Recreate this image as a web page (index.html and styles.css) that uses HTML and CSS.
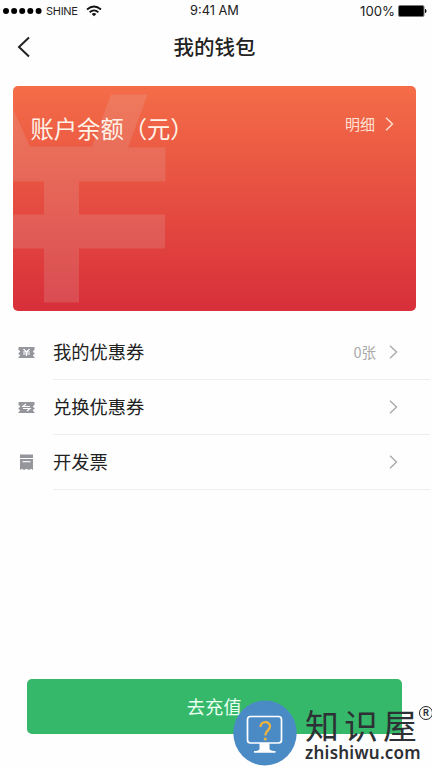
FILE: index.html
```html
<!DOCTYPE html>
<html lang="zh-CN">
<head>
<meta charset="utf-8">
<title>我的钱包</title>
<link rel="stylesheet" href="styles.css">
</head>
<body>
<div class="screen">
  <div class="status">
    <div class="signal">
      <svg class="dots" width="39" height="8" viewBox="0 0 39 8"><circle cx="3" cy="4" r="3"/><circle cx="11.1" cy="4" r="3"/><circle cx="19.2" cy="4" r="3"/><circle cx="27.3" cy="4" r="3"/><circle cx="35.6" cy="4" r="3"/></svg>
      <span class="carrier">SHINE</span>
      <svg class="wifi" width="16" height="12" viewBox="0 0 16 12" fill="none" stroke="#111" stroke-width="1.8"><path d="M1 4.5Q8 -1.4 15 4.5"/><path d="M3.6 7.2Q8 3.6 12.4 7.2"/><path d="M5.6 8.9Q8 7.1 10.4 8.9L8 11.3Z" fill="#111" stroke="none"/></svg>
    </div>
    <div class="time">9:41 AM</div>
    <div class="power"><span>100%</span>
      <svg width="29" height="12" viewBox="0 0 29 12"><rect x=".5" y=".5" width="25.5" height="11" rx="1.5" fill="#000" stroke="#777"/><path d="M27 4Q28.5 4.2 28.5 6T27 8Z"/></svg>
    </div>
  </div>
  <header class="nav">
    <svg class="back" width="14" height="22" viewBox="0 0 14 22"><path d="M12 1.5 2 11l10 9.5" fill="none" stroke="#222" stroke-width="2"/></svg>
    <h1>我的钱包</h1>
  </header>
  <section class="card">
    <svg class="yen" width="154" height="225" viewBox="0 0 154 225"><path d="M98 8.500H134.500L115 61.500H152.500V95.500H66V128.500H152V162.500H66V216.500H31V162.500H0V128.500H31V95.500H0V23L17 60.500H79Z" fill="#dfb8b4" fill-opacity=".2"/></svg>
    <h2>账户余额（元）</h2>
    <a class="detail">明细<svg class="chev" width="9" height="14" viewBox="0 0 9 14"><path d="M1 .8 7.500 7 1 13.200"/></svg></a>
  </section>
  <main class="list">
    <div class="row">
      <svg class="icon" width="17" height="17" viewBox="0 0 17 17"><path d="M.5 3H16.500V6L15 7V8L16.500 9V10L15 11V12L16.500 13V14H.5V13L2 12V11L.5 10V9L2 8V7L.5 6Z" fill="#94969c"/><path d="M5.500 5 8.500 8l3-3M5 8h7M5 10h7M8.500 8v4" fill="none" stroke="#fff" stroke-width="1.100"/></svg>
      <div class="item"><span>我的优惠券</span><span class="count">0张</span><svg class="chev" width="9" height="14" viewBox="0 0 9 14"><path d="M1 .8 7.500 7 1 13.200"/></svg></div>
    </div>
    <div class="row">
      <svg class="icon" width="17" height="17" viewBox="0 0 17 17"><path d="M.5 3H16.500V6L15 7V8L16.500 9V10L15 11V12L16.500 13V14H.5V13L2 12V11L.5 10V9L2 8V7L.5 6Z" fill="#94969c"/><path d="M12 7.500H5L8 5M5 9.500h7L9 12" fill="none" stroke="#fff" stroke-width="1.200"/></svg>
      <div class="item"><span>兑换优惠券</span><svg class="chev" width="9" height="14" viewBox="0 0 9 14"><path d="M1 .8 7.500 7 1 13.200"/></svg></div>
    </div>
    <div class="row">
      <svg class="icon" width="17" height="17" viewBox="0 0 17 17"><path d="M2 .5H15V4H2ZM2 5H15V16L13 14.700 11 16 8.500 14.700 6 16 4 14.700 2 16Z" fill="#94969c"/><path d="M4.500 7.700H12.500" stroke="#fff" stroke-width="1.100"/></svg>
      <div class="item"><span>开发票</span><svg class="chev" width="9" height="14" viewBox="0 0 9 14"><path d="M1 .8 7.500 7 1 13.200"/></svg></div>
    </div>
  </main>
  <button class="recharge">去充值</button>
  <div class="brand">
    <svg class="badge" width="64" height="66" viewBox="0 0 64 66"><ellipse cx="32" cy="33" rx="31.700" ry="32.500" fill="#4b8bc5"/><rect x="14.500" y="16.500" width="34" height="26.500" rx="3" fill="none" stroke="#fff" stroke-width="1.700"/><path d="M26.500 43h10v6q1 2 6 2v1.800H21V51q5 0 5.500-2Z" fill="#fff"/><path d="M27.500 27C27.500 20.500 37 20.500 37 26.500C37 30.500 32.300 30.500 32.300 35.500" fill="none" stroke="#efb33c" stroke-width="2.300"/><circle cx="32.300" cy="39" r="1.500" fill="#efb33c"/></svg>
    <div class="words"><div class="brand-name">知识屋</div><div class="domain">zhishiwu.com</div></div>
    <div class="mark">R</div>
  </div>
</div>
</body>
</html>
```
FILE: styles.css
```css
* { box-sizing: border-box; }
body { margin: 0; background: #fefefe; color: #222; font-family: "Noto Sans CJK SC", sans-serif; }
.screen { position: relative; width: 432px; height: 768px; overflow: hidden; display: flex; flex-direction: column; }
.status { height: 22px; display: grid; grid-template-columns: 1fr auto 1fr; align-items: center; font-family: Inter, sans-serif; font-size: 13px; line-height: 22px; padding: 0 5px 0 3px; }
.signal { display: flex; align-items: center; }
.carrier { font-size: 11px; margin-left: 4px; letter-spacing: -.3px; width: 31px; }
.wifi { margin-left: 9px; }
.time { font-size: 12.8px; letter-spacing: 0; margin-left: -1px; }
.power { display: flex; justify-content: flex-end; align-items: center; gap: 3px; font-size: 13.2px; }
.nav { height: 64px; padding: 0 20px 0 17px; display: grid; grid-template-columns: 14px 1fr 14px; align-items: start; }
.back { margin-top: 14px; }
h1 { margin: 9px 0 0; text-align: center; font-size: 20.5px; line-height: 31px; font-weight: 500; }
.card { position: relative; flex: none; height: 225px; margin: 0 16px 0 12.500px; border-radius: 5px; overflow: hidden; background: linear-gradient(#f46d48, #d82f3a); color: #fff3e8; display: flex; justify-content: space-between; align-items: flex-start; padding: 24px 22px 0 18px; }
.yen { position: absolute; left: 0; top: 0; }
h2 { position: relative; margin: 1px 0 0; font-size: 23.300px; line-height: 34px; font-weight: 400; white-space: nowrap; }
.detail { display: flex; align-items: center; gap: 10px; font-size: 15px; line-height: 28px; color: #ffe0d3; }
.chev { fill: none; stroke: #aaa; stroke-width: 1.4; flex: none; }
.detail .chev { stroke: #ffe0d3; }
.list { margin-top: 14px; }
.row { height: 55px; display: flex; align-items: center; padding-left: 18px; }
.icon { flex: none; margin-right: 18px; }
.item { width: 377px; height: 55px; border-bottom: 1px solid #eee; display: flex; align-items: center; justify-content: space-between; padding-right: 32px; font-size: 18.300px; }
.item span { padding-bottom: 2px; }
.count { margin-left: auto; margin-right: 13px; font-size: 14.500px; color: #aaa; }
.recharge { margin: 189px 30px 0 26.500px; flex: none; height: 55px; border: 0; border-radius: 5px; background: #36b86a; color: #e9fff1; font: 400 18.300px/55px "Noto Sans CJK SC", sans-serif; padding: 0; }
.brand { position: absolute; left: 233px; top: 700px; display: flex; color: #2d3034; }
.words { margin: 5px 0 0 8px; width: 113px; }
.brand-name { font-size: 34px; line-height: 39px; letter-spacing: 5px; font-weight: 400; white-space: nowrap; }
.domain { font: 600 17px/17px "Noto Sans", sans-serif; letter-spacing: .25px; }
.mark { position: absolute; left: 186px; top: 6px; width: 14px; height: 14px; border: 1px solid #222; border-radius: 50%; font: 700 9px/12px Inter, sans-serif; text-align: center; }
```
